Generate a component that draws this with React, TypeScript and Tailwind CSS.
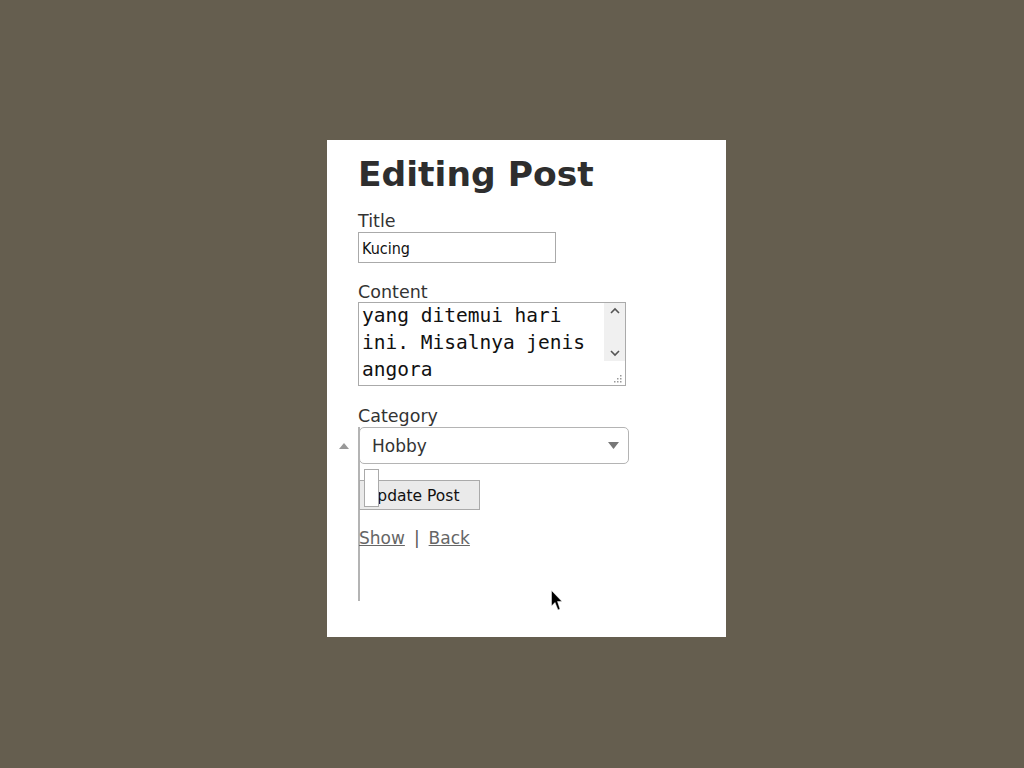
const App = () => {
  return (
    <div className="min-h-[768px] w-[1024px] bg-[#655e4f] pt-[140px] pl-[327px] font-['DejaVu_Sans',sans-serif]">
      <div className="w-[399px] h-[497px] bg-white pl-[31px] pt-[12px] text-[#333]">
        <h1 className="text-[34.5px] font-bold leading-[44px] text-[#2e2e2e]">Editing Post</h1>

        <div className="mt-[15px] flex flex-col">
          <label className="text-[17.5px] leading-[20px]">Title</label>
          <div className="mt-[1px] w-[198px] h-[31px] border border-[#aaa] flex items-center pl-[3px] pt-[3px]">
            <span className="font-['DejaVu_Sans_Condensed','DejaVu_Sans',sans-serif] text-[16px] text-[#111]">Kucing</span>
          </div>
        </div>

        <div className="mt-[19px] flex flex-col">
          <label className="text-[17.5px] leading-[20px]">Content</label>
          <div className="w-[268px] h-[84px] border border-[#aaa] flex">
            <div className="flex-1 pl-[3px] -mt-[1px] font-['DejaVu_Sans_Mono',monospace] text-[19.5px] leading-[27px] text-[#111] whitespace-pre">
              {"yang ditemui hari\nini. Misalnya jenis\nangora"}
            </div>
            <div className="w-[21px] flex flex-col">
              <div className="h-[58px] bg-[#f0f0f0] flex flex-col items-center justify-between py-[4px] text-[#555]">
                <svg width="10" height="8" viewBox="0 0 10 8"><path d="M1 6 L5 2 L9 6" stroke="#555" strokeWidth="1.6" fill="none" /></svg>
                <svg width="10" height="8" viewBox="0 0 10 8"><path d="M1 2 L5 6 L9 2" stroke="#555" strokeWidth="1.6" fill="none" /></svg>
              </div>
              <div className="flex-1 flex items-end justify-end pr-[3px] pb-[2px]">
                <svg width="9" height="9" viewBox="0 0 9 9" fill="#999">
                  <rect x="7" y="1" width="1.5" height="1.5" />
                  <rect x="4" y="4" width="1.5" height="1.5" />
                  <rect x="7" y="4" width="1.5" height="1.5" />
                  <rect x="1" y="7" width="1.5" height="1.5" />
                  <rect x="4" y="7" width="1.5" height="1.5" />
                  <rect x="7" y="7" width="1.5" height="1.5" />
                </svg>
              </div>
            </div>
          </div>
        </div>

        <div className="mt-[20px] flex flex-col">
          <label className="text-[17.5px] leading-[20px]">Category</label>
          <div className="relative mt-[1px]">
            <div className="absolute left-[-19px] top-[15px]">
              <svg width="10" height="7" viewBox="0 0 10 7"><path d="M0 7 L5 1 L10 7 Z" fill="#999" /></svg>
            </div>
            <div className="flex flex-col border-l-2 border-[#b4b4b4] h-[174px]">
              <div className="w-[270px] h-[37px] -ml-[1px] border border-[#b4b4b4] rounded-[5px] flex items-center justify-between pl-[12px] pr-[9px] pt-[3px]">
                <span className="text-[17px] text-[#333]">Hobby</span>
                <svg width="11" height="7" viewBox="0 0 11 7" className="-mt-[3px]"><path d="M0 0 L11 0 L5.5 7 Z" fill="#777" /></svg>
              </div>
              <div className="relative mt-[16px] -ml-[1px]">
                <button className="h-[30px] w-[121px] bg-[#eaeaea] border border-[#aaa] text-[15.5px] text-[#111] font-['DejaVu_Sans',sans-serif] pl-[6px] pt-[3px] text-left whitespace-nowrap">
                  Update Post
                </button>
                <div className="absolute left-[5px] top-[-11px] w-[15px] h-[38px] bg-white border border-[#aaa]" />
              </div>
              <div className="mt-[18px] -ml-[1px] text-[17px] leading-[20px] flex gap-[9px] text-[#666]">
                <a className="underline">Show</a>
                <span className="text-[#555]">|</span>
                <a className="underline">Back</a>
              </div>
            </div>
          </div>
        </div>
      </div>
      <div className="absolute left-[551px] top-[590px]">
        <svg width="12" height="24" viewBox="0 0 12 24">
          <path d="M0.5 0.5 L0.5 16 L4 12.5 L7 20 L9 19 L6.5 11.5 L11 11.5 Z" fill="#000" stroke="#fff" strokeWidth="0.5" />
        </svg>
      </div>
    </div>
  );
};

export default App;
